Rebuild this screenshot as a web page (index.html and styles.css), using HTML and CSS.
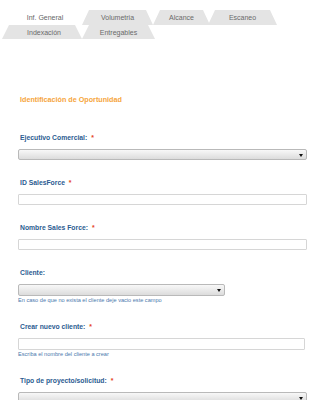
FILE: index.html
```html
<!DOCTYPE html>
<html lang="es">
<head>
    <meta charset="UTF-8">
    <meta name="viewport" content="width=device-width, initial-scale=1.0">
    <title>Identificación de Oportunidad</title>
    <link rel="stylesheet" href="styles.css">
</head>
<body>
    <div class="tabs">
        <div class="tab-row row-top">
            <span class="tab active tab-inf">Inf. General</span>
            <span class="tab tab-vol">Volumetria</span>
            <span class="tab tab-alc">Alcance</span>
            <span class="tab tab-esc">Escaneo</span>
        </div>
        <div class="tab-row row-bottom">
            <span class="tab tab-idx">Indexación</span>
            <span class="tab tab-ent">Entregables</span>
        </div>
    </div>

    <form class="form">
        <h2 class="section-title">Identificación de Oportunidad</h2>

        <div class="field field-first">
            <label class="label">Ejecutivo Comercial: <span class="req">*</span></label>
            <div class="select-wrap"><select class="select"></select></div>
        </div>

        <div class="field">
            <label class="label">ID SalesForce <span class="req">*</span></label>
            <input class="input" type="text">
        </div>

        <div class="field">
            <label class="label">Nombre Sales Force: <span class="req">*</span></label>
            <input class="input" type="text">
        </div>

        <div class="field">
            <label class="label">Cliente:</label>
            <div class="select-wrap select-short"><select class="select select-tall"></select></div>
            <div class="help">En caso de que no exista el cliente deje vacio este campo</div>
        </div>

        <div class="field">
            <label class="label">Crear nuevo cliente: <span class="req">*</span></label>
            <input class="input input-tall input-narrow" type="text">
            <div class="help">Escriba el nombre del cliente a crear</div>
        </div>

        <div class="field">
            <label class="label">Tipo de proyecto/solicitud: <span class="req">*</span></label>
            <div class="select-wrap"><select class="select"></select></div>
        </div>
    </form>
</body>
</html>
```

FILE: styles.css
```css
body {
    margin: 0;
    padding: 0;
    background: #fff;
    font-family: "Liberation Sans", Arial, sans-serif;
}
.tabs {
    padding-top: 10px;
}
.tab-row {
    display: flex;
}
.row-top {
    height: 15px;
    margin-left: 8px;
}
.row-bottom {
    height: 14px;
    margin-left: 2px;
}
.tab {
    display: flex;
    align-items: center;
    justify-content: center;
    font-size: 7px;
    color: #6a6a6a;
    background-color: #e4e4e4;
    clip-path: polygon(7px 0, calc(100% - 7px) 0, 100% 100%, 0 100%);
}
.tab.active {
    background-color: #fff;
    color: #666;
}
.tab-inf { width: 74px; }
.tab-vol { width: 71px; }
.tab-alc { width: 57px; }
.tab-esc { width: 69px; margin-left: -2px; }
.tab-idx { width: 80px; padding-left: 4px; box-sizing: border-box; }
.tab-ent { width: 73px; }

.form {
    margin: 0;
    padding: 0 18px;
}
.section-title {
    margin: 57px 0 0;
    padding-left: 2px;
    font-size: 7.2px;
    line-height: 8px;
    font-weight: bold;
    color: #f6a53c;
}
.field {
    margin-top: 18px;
}
.field-first {
    margin-top: 29px;
}
.label {
    display: block;
    padding-left: 2px;
    font-size: 6.8px;
    line-height: 10px;
    font-weight: bold;
    color: #2c5c91;
    margin-bottom: 6px;
}
.req {
    color: #e5421e;
    margin-left: 2px;
}
.select-wrap {
    position: relative;
    width: 289px;
    height: 11px;
}
.select-wrap::after {
    content: '';
    position: absolute;
    right: 4px;
    top: 50%;
    margin-top: -1px;
    border-left: 2px solid transparent;
    border-right: 2px solid transparent;
    border-top: 3px solid #111;
}
.select-short {
    width: 207px;
    height: 12px;
}
.select {
    display: block;
    width: 100%;
    height: 100%;
    margin: 0;
    padding: 0;
    box-sizing: border-box;
    -webkit-appearance: none;
    appearance: none;
    border: 1px solid #b9b9b9;
    border-radius: 2px;
    background: linear-gradient(#f8f8f8, #dcdcdc);
}
.input {
    display: block;
    width: 289px;
    height: 11px;
    margin: 0;
    padding: 0;
    box-sizing: border-box;
    border: 1px solid #d6d6d6;
    border-radius: 1px;
    background: #fff;
}
.input-tall {
    height: 12px;
}
.input-narrow {
    width: 287px;
}
.help {
    margin-top: 1px;
    font-size: 5.6px;
    line-height: 7px;
    color: #4a79ad;
}
```
